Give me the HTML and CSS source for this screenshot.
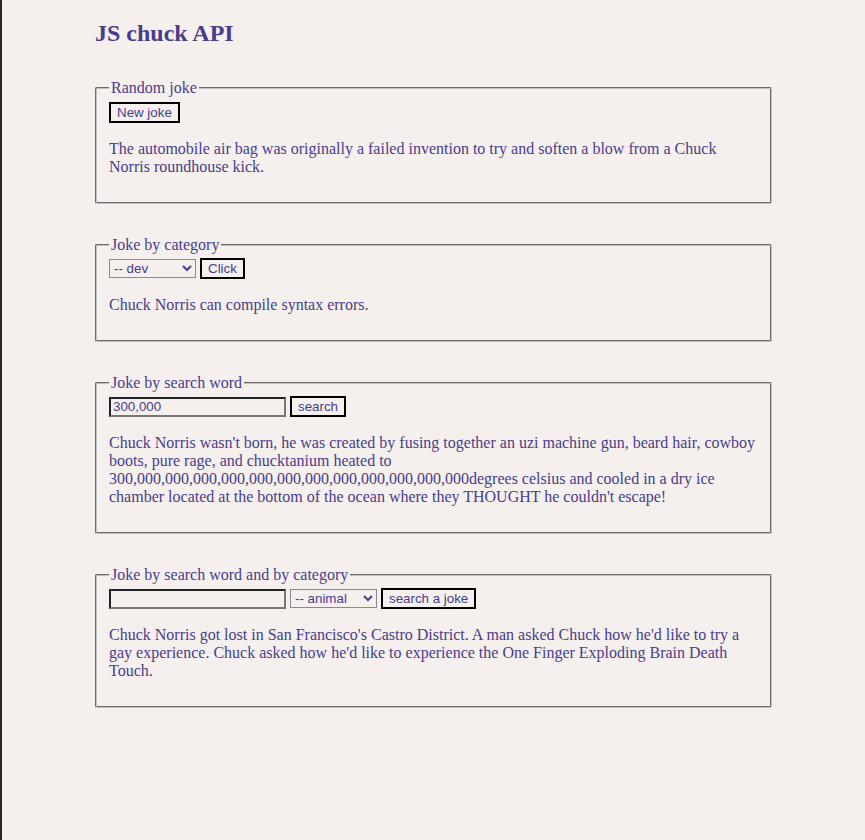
FILE: index.html
```html
<!DOCTYPE html>
<html lang="en">
<head>
<meta charset="utf-8">
<title>JS chuck API</title>
<link rel="stylesheet" href="styles.css">
</head>
<body>
<div class="page">
  <h2 class="title">JS chuck API</h2>

  <fieldset class="box">
    <legend>Random joke</legend>
    <button class="btn">New joke</button>
    <p class="joke">The automobile air bag was originally a failed invention to try and soften a blow from a Chuck Norris roundhouse kick.</p>
  </fieldset>

  <fieldset class="box">
    <legend>Joke by category</legend>
    <div class="controls">
      <select class="sel"><option>-- dev</option></select>
      <button class="btn">Click</button>
    </div>
    <p class="joke">Chuck Norris can compile syntax errors.</p>
  </fieldset>

  <fieldset class="box">
    <legend>Joke by search word</legend>
    <div class="controls">
      <input class="field" type="text" value="300,000">
      <button class="btn">search</button>
    </div>
    <p class="joke">Chuck Norris wasn't born, he was created by fusing together an uzi machine gun, beard hair, cowboy boots, pure rage, and chucktanium heated to 300,000,000,000,000,000,000,000,000,000,000,000,000degrees celsius and cooled in a dry ice chamber located at the bottom of the ocean where they THOUGHT he couldn't escape!</p>
  </fieldset>

  <fieldset class="box">
    <legend>Joke by search word and by category</legend>
    <div class="controls">
      <input class="field" type="text" value="">
      <select class="sel"><option>-- animal</option></select>
      <button class="btn">search a joke</button>
    </div>
    <p class="joke">Chuck Norris got lost in San Francisco's Castro District. A man asked Chuck how he'd like to try a gay experience. Chuck asked how he'd like to experience the One Finger Exploding Brain Death Touch.</p>
  </fieldset>
</div>
</body>
</html>
```
FILE: styles.css
```css
html, body {
  margin: 0;
  padding: 0;
}
body {
  background: #f5f0ed;
  border-left: 2px solid #252525;
  min-height: 840px;
  box-sizing: border-box;
  color: #483d8b;
  font-family: "Liberation Serif", "Times New Roman", serif;
  font-size: 16px;
}
.page {
  width: 681px;
  margin-left: 91px;
  padding-top: 1px;
}
.title {
  font-size: 24px;
  font-weight: bold;
  margin: 18px 0 0 2px;
  line-height: 28px;
}
.box {
  margin: 32px 2px 0 2px;
  padding: 0 12px 10px 12px;
  border: 2px groove #c0c0c0;
  border-radius: 2px;
}
.box + .box {
  margin-top: 32px;
}
.box legend {
  padding: 0 2px;
  line-height: normal;
}
.controls {
  display: flex;
  gap: 4px;
  align-items: center;
  margin-top: 4px;
}
.btn {
  font-family: "Liberation Sans", Arial, sans-serif;
  font-size: 13.333px;
  color: #483d8b;
  background: transparent;
  border: 2px solid #000;
  padding: 1px 6px;
  line-height: normal;
  margin: 0;
}
.box > .btn {
  margin-top: 5px;
}
.sel {
  font-family: "Liberation Sans", Arial, sans-serif;
  font-size: 13.333px;
  color: #483d8b;
  background: transparent;
  border: 1px solid #8a8a8a;
  width: 87px;
  height: 19px;
  padding: 0;
  margin: 0;
}
.field {
  font-family: "Liberation Sans", Arial, sans-serif;
  font-size: 13.333px;
  color: #483d8b;
  background: transparent;
  border: 2px inset #767676;
  width: 177px;
  height: 20px;
  box-sizing: border-box;
  padding: 1px 2px;
  margin: 0;
}
.joke {
  margin: 17px 0 16px 0;
  line-height: normal;
}
.controls + .joke {
  margin-top: 17px;
}
```
